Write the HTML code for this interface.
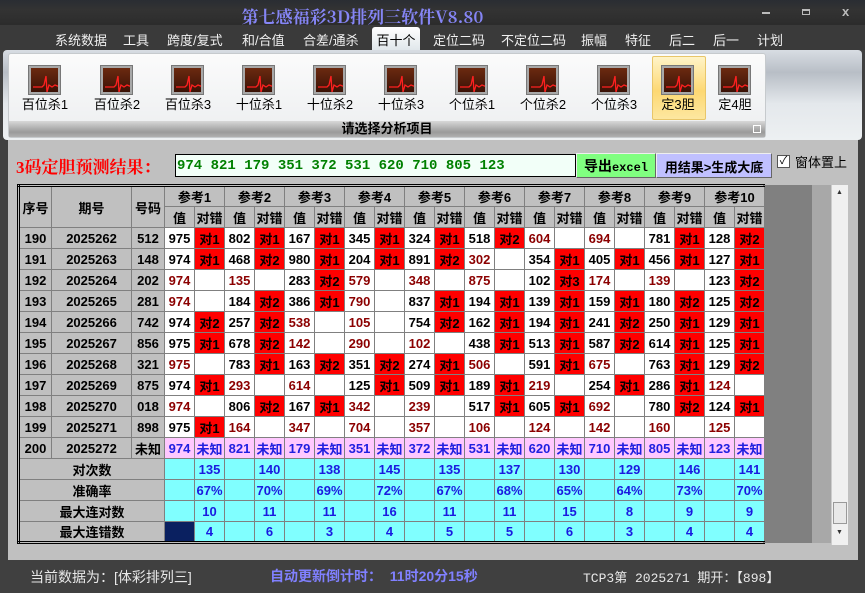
<!DOCTYPE html>
<html><head><meta charset="utf-8">
<style>
*{margin:0;padding:0;box-sizing:border-box}
body{width:865px;height:593px;overflow:hidden;background:#404040;position:relative;font-family:"Liberation Sans","Noto Sans CJK SC",sans-serif}
.a{position:absolute}
#title{left:0;top:0;width:865px;height:25px;background:linear-gradient(#2a2d33,#333 40%,#2c2c2c)}
#title .t{left:0;width:725px;top:3px;text-align:center;color:#8585f5;font:bold 17px "Noto Serif CJK SC","Liberation Mono",serif}
#menu{left:0;top:25px;width:865px;height:25px;background:#3a3a3a}
.mi{top:30px;color:#f0f0f0;font-size:13px;white-space:nowrap}
#tabsel{left:372px;top:27px;width:48px;height:24px;background:linear-gradient(#fff,#dfe6ea);border-radius:3px 3px 0 0;color:#000;font-size:13px;text-align:center;padding-top:3px}
#rib{left:3px;top:50px;width:859px;height:90px;background:linear-gradient(#d8dde3,#b8bec6 25%,#e4e8ec 60%,#edf0f2);border-radius:4px}
#panel{left:8px;top:53px;width:758px;height:85px;border:1px solid #c6cacd;background:linear-gradient(#fbfbfb,#eceef0);border-radius:3px}
#pbot{left:9px;top:121px;width:756px;height:16px;background:linear-gradient(#d8d8d8,#9a9a9a 70%,#b0b0b0);text-align:center;font-weight:bold;font-size:13px;line-height:15px}
.ic{width:31px;height:28px;background:linear-gradient(#6b2a10,#3a1206);border:2px solid #a8a8a8;box-shadow:0 0 0 1px #777}
.ic svg{position:absolute;left:0;top:0}
.il{font-size:13px;color:#000;white-space:nowrap;text-align:center;width:70px}
#sel{left:652px;top:56px;width:54px;height:64px;background:linear-gradient(#fff4c8,#fdd873 55%,#fde7a0);border:1px solid #e8c66a;border-radius:2px}
#main{left:8px;top:140px;width:850px;height:420px;background:#c0c0c0}
#lab{left:16px;top:153px;color:#f00;font-weight:bold;font-size:17px;font-family:"Liberation Serif","Noto Serif CJK SC",serif}
#res{left:175px;top:154px;width:401px;height:23px;background:#f2fff8;border:1px solid #000;color:#008000;font:bold 14px "Liberation Mono",monospace;padding:3px 0 0 1px;white-space:pre}
#b1{left:576px;top:153px;width:80px;height:25px;background:#80ff80;border:1px solid #eee;border-right-color:#666;border-bottom-color:#666;font-weight:bold;font-size:14px;text-align:center;padding-top:2px}
#b1 span{font:bold 12px "Liberation Mono",monospace}
#b2{left:656px;top:153px;width:116px;height:25px;background:#c0c0ff;border:1px solid #eee;border-right-color:#666;border-bottom-color:#666;font-weight:bold;font-size:13px;text-align:center;padding-top:3px}
#cb{left:777px;top:155px;width:13px;height:13px;background:#fff;border:1px solid #555;font-size:11px;line-height:11px;text-align:center}
#cbl{left:795px;top:152px;font-size:13px}
table{position:absolute;left:17px;top:184px;border-collapse:collapse;table-layout:fixed;border:3px double #000;border-right:1px solid #000}
td{border:1px solid #808080;height:21px;text-align:center;font-weight:bold;font-size:13px;padding:0;overflow:hidden;white-space:nowrap;background:#fff;color:#000}
td.h{background:#c0c0c0}
td.r{color:#8b0000}
td.m{background:#f00;color:#000}
td.p{background:#ffc8ff;color:#2020e0}
td.c{background:#80ffff;color:#1a1ae0}
td.n{background:#0a2060}
#dk{left:763px;top:185px;width:49px;height:358px;background:#808080}
#lt{left:812px;top:185px;width:19px;height:358px;background:#a8a8a8}
#sb{left:831px;top:185px;width:17px;height:360px;background:#f0f0f0;border-left:1px solid #ccc}
#st{left:0;top:560px;width:865px;height:33px;background:#404040}
</style></head><body>
<div id="title" class="a"><div class="t a">第七感福彩3D排列三软件V8.80</div>
<div class="a" style="left:762px;top:12px;width:8px;height:2px;background:#bbb"></div>
<div class="a" style="left:802px;top:9px;width:8px;height:6px;border:1px solid #bbb;border-top-width:2px"></div>
<div class="a" style="left:842px;top:4px;color:#bbb;font-weight:bold;font-size:13px">x</div></div>
<div id="menu" class="a"></div>
<div class="a mi" style="left:55px">系统数据</div>
<div class="a mi" style="left:123px">工具</div>
<div class="a mi" style="left:167px">跨度/复式</div>
<div class="a mi" style="left:242px">和/合值</div>
<div class="a mi" style="left:303px">合差/通杀</div>
<div id="tabsel" class="a">百十个</div>
<div class="a mi" style="left:433px">定位二码</div>
<div class="a mi" style="left:501px">不定位二码</div>
<div class="a mi" style="left:581px">振幅</div>
<div class="a mi" style="left:625px">特征</div>
<div class="a mi" style="left:669px">后二</div>
<div class="a mi" style="left:713px">后一</div>
<div class="a mi" style="left:757px">计划</div>
<div id="rib" class="a"></div>
<div id="panel" class="a"></div>
<div id="sel" class="a"></div>
<div id="pbot" class="a">请选择分析项目</div>
<div class="a" style="left:753px;top:125px;width:8px;height:8px;border:1px solid #fff"></div>

<svg width="0" height="0" style="position:absolute"><defs><g id="ek"><path d="M2 19 H11 L13 17 L15 8 L16 24 L18 17 L21 19 L24 17 L29 19" stroke="#ff2020" stroke-width="1.3" fill="none"/></g></defs></svg>
<div class="a ic" style="left:29px;top:66px"><svg width="27" height="24"><use href="#ek"/></svg></div>
<div class="a ic" style="left:101px;top:66px"><svg width="27" height="24"><use href="#ek"/></svg></div>
<div class="a ic" style="left:172px;top:66px"><svg width="27" height="24"><use href="#ek"/></svg></div>
<div class="a ic" style="left:243px;top:66px"><svg width="27" height="24"><use href="#ek"/></svg></div>
<div class="a ic" style="left:314px;top:66px"><svg width="27" height="24"><use href="#ek"/></svg></div>
<div class="a ic" style="left:385px;top:66px"><svg width="27" height="24"><use href="#ek"/></svg></div>
<div class="a ic" style="left:456px;top:66px"><svg width="27" height="24"><use href="#ek"/></svg></div>
<div class="a ic" style="left:527px;top:66px"><svg width="27" height="24"><use href="#ek"/></svg></div>
<div class="a ic" style="left:598px;top:66px"><svg width="27" height="24"><use href="#ek"/></svg></div>
<div class="a ic" style="left:662px;top:66px"><svg width="27" height="24"><use href="#ek"/></svg></div>
<div class="a ic" style="left:719px;top:66px"><svg width="27" height="24"><use href="#ek"/></svg></div>
<div class="a il" style="left:10px;top:94px">百位杀1</div>
<div class="a il" style="left:82px;top:94px">百位杀2</div>
<div class="a il" style="left:153px;top:94px">百位杀3</div>
<div class="a il" style="left:224px;top:94px">十位杀1</div>
<div class="a il" style="left:295px;top:94px">十位杀2</div>
<div class="a il" style="left:366px;top:94px">十位杀3</div>
<div class="a il" style="left:437px;top:94px">个位杀1</div>
<div class="a il" style="left:508px;top:94px">个位杀2</div>
<div class="a il" style="left:579px;top:94px">个位杀3</div>
<div class="a il" style="left:643px;top:94px">定3胆</div>
<div class="a il" style="left:700px;top:94px">定4胆</div>

<div id="main" class="a"></div>
<div class="a" style="left:0;top:140px;width:8px;height:420px;background:#404040"></div>
<div id="lab" class="a">3码定胆预测结果：</div>
<div id="res" class="a">974 821 179 351 372 531 620 710 805 123</div>
<div id="b1" class="a">导出<span>excel</span></div>
<div id="b2" class="a">用结果&gt;生成大底</div>
<div id="cb" class="a">✓</div>
<div id="cbl" class="a">窗体置上</div>

<div id="dk" class="a"></div><div id="lt" class="a"></div>
<div id="sb" class="a"><div class="a" style="left:4px;top:4px;font-size:7px;color:#333">▲</div>
<div class="a" style="left:1px;top:317px;width:14px;height:22px;background:#e8e8e8;border:1px solid #999"></div>
<div class="a" style="left:4px;top:344px;font-size:7px;color:#333">▼</div></div>

<table>
<colgroup><col style="width:33px"><col style="width:80px"><col style="width:33px">
<col span="20" style="width:30px"></colgroup>
<tr><td class="h" rowspan="2">序号</td><td class="h" rowspan="2">期号</td><td class="h" rowspan="2">号码</td>
<td class="h" colspan="2">参考1</td><td class="h" colspan="2">参考2</td><td class="h" colspan="2">参考3</td><td class="h" colspan="2">参考4</td><td class="h" colspan="2">参考5</td><td class="h" colspan="2">参考6</td><td class="h" colspan="2">参考7</td><td class="h" colspan="2">参考8</td><td class="h" colspan="2">参考9</td><td class="h" colspan="2">参考10</td></tr>
<tr><td class="h">值</td><td class="h">对错</td><td class="h">值</td><td class="h">对错</td><td class="h">值</td><td class="h">对错</td><td class="h">值</td><td class="h">对错</td><td class="h">值</td><td class="h">对错</td><td class="h">值</td><td class="h">对错</td><td class="h">值</td><td class="h">对错</td><td class="h">值</td><td class="h">对错</td><td class="h">值</td><td class="h">对错</td><td class="h">值</td><td class="h">对错</td></tr>
<tr><td class="h">190</td><td class="h">2025262</td><td class="h">512</td><td>975</td><td class="m">对1</td><td>802</td><td class="m">对1</td><td>167</td><td class="m">对1</td><td>345</td><td class="m">对1</td><td>324</td><td class="m">对1</td><td>518</td><td class="m">对2</td><td class="r">604</td><td></td><td class="r">694</td><td></td><td>781</td><td class="m">对1</td><td>128</td><td class="m">对2</td></tr>
<tr><td class="h">191</td><td class="h">2025263</td><td class="h">148</td><td>974</td><td class="m">对1</td><td>468</td><td class="m">对2</td><td>980</td><td class="m">对1</td><td>204</td><td class="m">对1</td><td>891</td><td class="m">对2</td><td class="r">302</td><td></td><td>354</td><td class="m">对1</td><td>405</td><td class="m">对1</td><td>456</td><td class="m">对1</td><td>127</td><td class="m">对1</td></tr>
<tr><td class="h">192</td><td class="h">2025264</td><td class="h">202</td><td class="r">974</td><td></td><td class="r">135</td><td></td><td>283</td><td class="m">对2</td><td class="r">579</td><td></td><td class="r">348</td><td></td><td class="r">875</td><td></td><td>102</td><td class="m">对3</td><td class="r">174</td><td></td><td class="r">139</td><td></td><td>123</td><td class="m">对2</td></tr>
<tr><td class="h">193</td><td class="h">2025265</td><td class="h">281</td><td class="r">974</td><td></td><td>184</td><td class="m">对2</td><td>386</td><td class="m">对1</td><td class="r">790</td><td></td><td>837</td><td class="m">对1</td><td>194</td><td class="m">对1</td><td>139</td><td class="m">对1</td><td>159</td><td class="m">对1</td><td>180</td><td class="m">对2</td><td>125</td><td class="m">对2</td></tr>
<tr><td class="h">194</td><td class="h">2025266</td><td class="h">742</td><td>974</td><td class="m">对2</td><td>257</td><td class="m">对2</td><td class="r">538</td><td></td><td class="r">105</td><td></td><td>754</td><td class="m">对2</td><td>162</td><td class="m">对1</td><td>194</td><td class="m">对1</td><td>241</td><td class="m">对2</td><td>250</td><td class="m">对1</td><td>129</td><td class="m">对1</td></tr>
<tr><td class="h">195</td><td class="h">2025267</td><td class="h">856</td><td>975</td><td class="m">对1</td><td>678</td><td class="m">对2</td><td class="r">142</td><td></td><td class="r">290</td><td></td><td class="r">102</td><td></td><td>438</td><td class="m">对1</td><td>513</td><td class="m">对1</td><td>587</td><td class="m">对2</td><td>614</td><td class="m">对1</td><td>125</td><td class="m">对1</td></tr>
<tr><td class="h">196</td><td class="h">2025268</td><td class="h">321</td><td class="r">975</td><td></td><td>783</td><td class="m">对1</td><td>163</td><td class="m">对2</td><td>351</td><td class="m">对2</td><td>274</td><td class="m">对1</td><td class="r">506</td><td></td><td>591</td><td class="m">对1</td><td class="r">675</td><td></td><td>763</td><td class="m">对1</td><td>129</td><td class="m">对2</td></tr>
<tr><td class="h">197</td><td class="h">2025269</td><td class="h">875</td><td>974</td><td class="m">对1</td><td class="r">293</td><td></td><td class="r">614</td><td></td><td>125</td><td class="m">对1</td><td>509</td><td class="m">对1</td><td>189</td><td class="m">对1</td><td class="r">219</td><td></td><td>254</td><td class="m">对1</td><td>286</td><td class="m">对1</td><td class="r">124</td><td></td></tr>
<tr><td class="h">198</td><td class="h">2025270</td><td class="h">018</td><td class="r">974</td><td></td><td>806</td><td class="m">对2</td><td>167</td><td class="m">对1</td><td class="r">342</td><td></td><td class="r">239</td><td></td><td>517</td><td class="m">对1</td><td>605</td><td class="m">对1</td><td class="r">692</td><td></td><td>780</td><td class="m">对2</td><td>124</td><td class="m">对1</td></tr>
<tr><td class="h">199</td><td class="h">2025271</td><td class="h">898</td><td>975</td><td class="m">对1</td><td class="r">164</td><td></td><td class="r">347</td><td></td><td class="r">704</td><td></td><td class="r">357</td><td></td><td class="r">106</td><td></td><td class="r">124</td><td></td><td class="r">142</td><td></td><td class="r">160</td><td></td><td class="r">125</td><td></td></tr>
<tr><td class="h">200</td><td class="h">2025272</td><td class="h">未知</td><td class="p">974</td><td class="p">未知</td><td class="p">821</td><td class="p">未知</td><td class="p">179</td><td class="p">未知</td><td class="p">351</td><td class="p">未知</td><td class="p">372</td><td class="p">未知</td><td class="p">531</td><td class="p">未知</td><td class="p">620</td><td class="p">未知</td><td class="p">710</td><td class="p">未知</td><td class="p">805</td><td class="p">未知</td><td class="p">123</td><td class="p">未知</td></tr>
<tr><td class="h" colspan="3">对次数</td><td class="c"></td><td class="c">135</td><td class="c"></td><td class="c">140</td><td class="c"></td><td class="c">138</td><td class="c"></td><td class="c">145</td><td class="c"></td><td class="c">135</td><td class="c"></td><td class="c">137</td><td class="c"></td><td class="c">130</td><td class="c"></td><td class="c">129</td><td class="c"></td><td class="c">146</td><td class="c"></td><td class="c">141</td></tr>
<tr><td class="h" colspan="3">准确率</td><td class="c"></td><td class="c">67%</td><td class="c"></td><td class="c">70%</td><td class="c"></td><td class="c">69%</td><td class="c"></td><td class="c">72%</td><td class="c"></td><td class="c">67%</td><td class="c"></td><td class="c">68%</td><td class="c"></td><td class="c">65%</td><td class="c"></td><td class="c">64%</td><td class="c"></td><td class="c">73%</td><td class="c"></td><td class="c">70%</td></tr>
<tr><td class="h" colspan="3">最大连对数</td><td class="c"></td><td class="c">10</td><td class="c"></td><td class="c">11</td><td class="c"></td><td class="c">11</td><td class="c"></td><td class="c">16</td><td class="c"></td><td class="c">11</td><td class="c"></td><td class="c">11</td><td class="c"></td><td class="c">15</td><td class="c"></td><td class="c">8</td><td class="c"></td><td class="c">9</td><td class="c"></td><td class="c">9</td></tr>
<tr><td class="h" colspan="3">最大连错数</td><td class="n"></td><td class="c">4</td><td class="c"></td><td class="c">6</td><td class="c"></td><td class="c">3</td><td class="c"></td><td class="c">4</td><td class="c"></td><td class="c">5</td><td class="c"></td><td class="c">5</td><td class="c"></td><td class="c">6</td><td class="c"></td><td class="c">3</td><td class="c"></td><td class="c">4</td><td class="c"></td><td class="c">4</td></tr>
</table>

<div id="st" class="a">
<div class="a" style="left:30px;top:7px;color:#e8e8e8;font-size:14px">当前数据为：[体彩排列三]</div>
<div class="a" style="left:270px;top:6px;color:#8080ff;font-size:14px;font-weight:bold">自动更新倒计时：&nbsp;&nbsp;11时20分15秒</div>
<div class="a" style="left:583px;top:7px;color:#e8e8e8;font-size:13px;font-family:'Liberation Mono','Noto Sans CJK SC',monospace">TCP3第 2025271 期开：【898】</div>
</div>
</body></html>
